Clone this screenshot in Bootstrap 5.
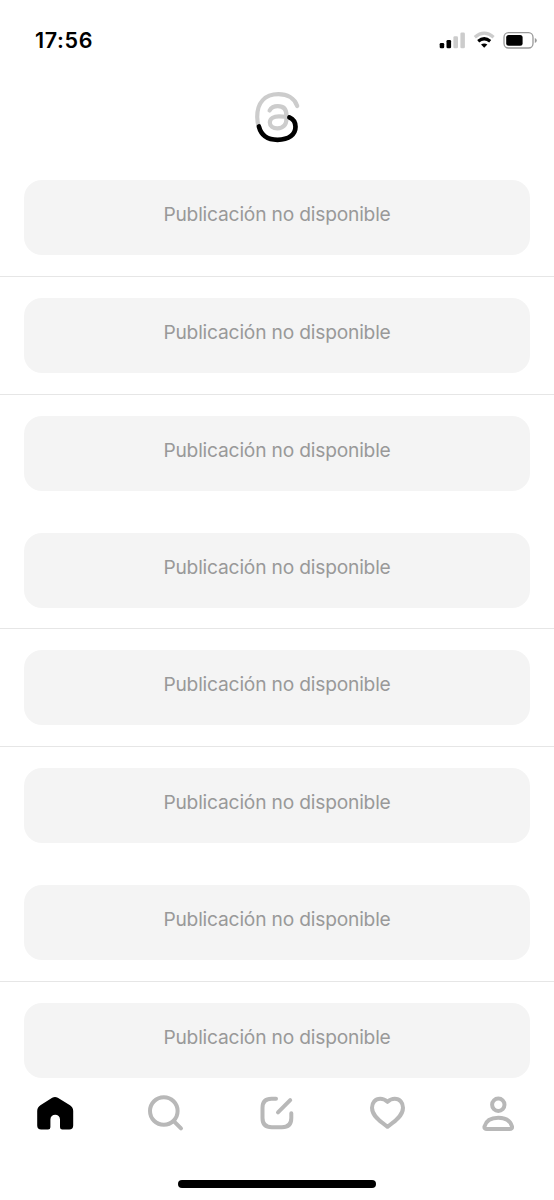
<!DOCTYPE html>
<html lang="es">
<head>
<meta charset="utf-8">
<meta name="viewport" content="width=device-width, initial-scale=1">
<title>Threads</title>
<link href="https://cdn.jsdelivr.net/npm/bootstrap@5.3.0/dist/css/bootstrap.min.css" rel="stylesheet">
<style>
body{font-family:Inter,"Liberation Sans",sans-serif;height:1200px;background:#fff}
svg{display:block;fill:none;stroke-linecap:round;stroke-linejoin:round}
.status{height:80px;padding:20px 14px 0 35px}
.clock{font-size:21.5px;font-weight:600;line-height:41px;color:#000;letter-spacing:.65px}
.brand-row{height:79.3px}
.feed-item{padding:20.9px 24px}
.feed-item.divided{border-bottom:1px solid #e6e6e6}
.unavailable{height:75px;border-radius:18px;background:#f4f4f4;color:#999;font-size:19.2px;line-height:69.4px;letter-spacing:-.19px}
.tabs{top:1079px;height:121px;background:#fff}
.tab-row{height:70px}
.tab-row svg{stroke:#b8b8b8;stroke-width:4}
.home-bar{width:198px;height:8px;background:#000;margin-top:31px}
</style>
</head>
<body class="position-relative overflow-hidden">
<header>
  <div class="status d-flex justify-content-between align-items-start">
    <div class="clock">17:56</div>
    <svg width="104" height="40" viewBox="436 20 104 40" aria-label="Señal, wifi y batería">
      <g fill="#000"><rect x="439.7" y="43" width="4.5" height="5.3" rx="1.3"/><rect x="446.5" y="40" width="4.6" height="8.3" rx="1.3"/></g>
      <g fill="#ccc"><rect x="453.4" y="36.3" width="4.6" height="12" rx="1.3"/><rect x="460.4" y="32.5" width="4.5" height="15.8" rx="1.3"/></g>
      <path d="M474.8 37.2Q484.2 29.2 493.6 37.2" stroke="#ccc" stroke-width="3.2" stroke-linecap="butt"/>
      <path d="M478.2 41.2Q484.2 36.3 490.2 41.2" stroke="#000" stroke-width="3.2" stroke-linecap="butt"/>
      <path d="M481 44.6Q484.2 42.2 487.4 44.6L484.2 47.8Z" fill="#000"/>
      <rect x="504" y="32.7" width="29" height="15.3" rx="4.5" stroke="#999" stroke-width="1.3"/>
      <rect x="506.2" y="35" width="16.4" height="10.8" rx="2.5" fill="#000"/>
      <path d="M534.8 38v5Q536.8 42.2 536.8 40.5T534.8 38Z" fill="#999"/>
    </svg>
  </div>
  <div class="brand-row d-flex justify-content-center">
    <svg width="76" height="76" viewBox="239 80 76 76" aria-label="Threads">
      <g stroke="#ccc" stroke-width="4.2">
        <path d="M297.2 106C294.5 98 287 94.2 278.5 94.2C264.5 94.2 257.2 103 257.2 117C257.2 120.5 257.8 124 259 127"/>
        <path d="M269.6 110.5C271.3 107.5 274.2 106.2 277.8 106.2C283.5 106.2 286.5 109.5 286.5 115.5V118.5C286.5 125 283 128.3 277.5 128.3C273 128.3 269.8 126 269.8 122.5C269.8 118.5 273.5 116.3 279 116.3C283 116.3 286.8 116.5 289.4 117.8"/>
      </g>
      <path d="M258.9 126.5C261.2 135.5 268 139.8 277.5 139.8C289 139.8 295.5 134.5 295.5 126.8C295.5 122.5 293 119 289.4 117.4" stroke="#000" stroke-width="4.7"/>
    </svg>
  </div>
</header>
<main>
  <div class="feed-item divided"><div class="unavailable text-center">Publicación no disponible</div></div>
  <div class="feed-item divided"><div class="unavailable text-center">Publicación no disponible</div></div>
  <div class="feed-item"><div class="unavailable text-center">Publicación no disponible</div></div>
  <div class="feed-item divided"><div class="unavailable text-center">Publicación no disponible</div></div>
  <div class="feed-item divided"><div class="unavailable text-center">Publicación no disponible</div></div>
  <div class="feed-item"><div class="unavailable text-center">Publicación no disponible</div></div>
  <div class="feed-item divided"><div class="unavailable text-center">Publicación no disponible</div></div>
  <div class="feed-item"><div class="unavailable text-center">Publicación no disponible</div></div>
</main>
<nav class="tabs position-absolute start-0 w-100">
  <div class="tab-row row g-0 row-cols-5 align-items-center">
    <a class="col d-flex justify-content-center" href="#" aria-label="Inicio"><svg width="60" height="60" viewBox="25 1084 60 60"><path d="M52.2 1097.8Q55 1096.2 57.8 1097.8L70 1105.3Q73.2 1107.5 73.2 1111V1125.5Q73.2 1129.5 69.2 1129.5H62.3Q60 1129.5 60 1127.2V1119.5A4.8 4.8 0 0 0 50.4 1119.5V1127.2Q50.4 1129.5 48.1 1129.5H41.2Q37.2 1129.5 37.2 1125.5V1111Q37.2 1107.5 40.4 1105.3Z" fill="#000" stroke="none"/></svg></a>
    <a class="col d-flex justify-content-center" href="#" aria-label="Buscar"><svg width="60" height="60" viewBox="136 1084 60 60"><circle cx="163.8" cy="1111" r="13.8"/><path d="M174 1121.3L181 1128.4"/></svg></a>
    <a class="col d-flex justify-content-center" href="#" aria-label="Publicar"><svg width="60" height="60" viewBox="247 1084 60 60"><path d="M276 1098.8H271.5Q262.5 1098.8 262.5 1107.8V1118Q262.5 1127.3 271.8 1127.3H282Q291.3 1127.3 291.3 1118V1113.3M278 1112.3L290.2 1100.2"/></svg></a>
    <a class="col d-flex justify-content-center" href="#" aria-label="Actividad"><svg width="60" height="60" viewBox="358 1084 60 60"><path d="M387.5 1101.8C385.2 1099.7 382.8 1098.8 380.2 1098.8C375.2 1098.8 372 1102.8 372 1107.7C372 1116.8 382.5 1123 387.5 1126.8C392.5 1123 403 1116.8 403 1107.7C403 1102.8 399.8 1098.8 394.8 1098.8C392.2 1098.8 389.8 1099.7 387.5 1101.8Z"/></svg></a>
    <a class="col d-flex justify-content-center" href="#" aria-label="Perfil"><svg width="60" height="60" viewBox="469 1084 60 60"><circle cx="498.3" cy="1104.8" r="6.2"/><path d="M487 1129H509.5Q512.5 1129 512 1126.5C510.5 1121 505.5 1117.8 498.3 1117.8S486 1121 484.5 1126.5Q484 1129 487 1129Z"/></svg></a>
  </div>
  <div class="home-bar rounded-pill mx-auto"></div>
</nav>
<script src="https://cdn.jsdelivr.net/npm/bootstrap@5.3.0/dist/js/bootstrap.bundle.min.js"></script>
</body>
</html>
